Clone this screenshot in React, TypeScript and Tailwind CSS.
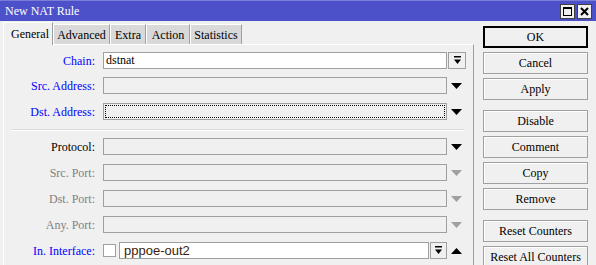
import React from 'react';

const serif = "[font-family:'Liberation_Serif',serif]";

function DownBar() {
  return (
    <svg width="9" height="9" viewBox="0 0 9 9">
      <rect x="1" y="0" width="7" height="1.5" fill="#000" />
      <path d="M1 3.5 H8 L4.5 8 Z" fill="#000" />
    </svg>
  );
}

function Arrow({ up, gray }: { up?: boolean; gray?: boolean }) {
  const c = gray ? '#a0a0a0' : '#000';
  return (
    <div className="w-[18px] flex justify-center">
      <svg width="11" height="6" viewBox="0 0 11 6">
        {up ? <path d="M0 6 L5.5 0 L11 6 Z" fill={c} /> : <path d="M0 0 H11 L5.5 6 Z" fill={c} />}
      </svg>
    </div>
  );
}

function Row({
  label,
  color,
  children,
  className = '',
}: {
  label: string;
  color: string;
  children: React.ReactNode;
  className?: string;
}) {
  return (
    <div className={`flex items-center h-[17px] ${className}`}>
      <div className={`w-[92px] pr-[1px] text-right text-[12px] ${color}`}>{label}</div>
      <div className="w-[7px]" />
      {children}
    </div>
  );
}

function EmptyField({ focus }: { focus?: boolean }) {
  return (
    <div className="w-[344px] h-[17px] border border-[#a0a0a0] bg-[#f0f0f0] p-[1px]">
      {focus && <div className="w-full h-full border border-dotted border-black" />}
    </div>
  );
}

const buttons: { label: string; gap?: boolean; def?: boolean }[] = [
  { label: 'OK', def: true },
  { label: 'Cancel' },
  { label: 'Apply' },
  { label: 'Disable', gap: true },
  { label: 'Comment' },
  { label: 'Copy' },
  { label: 'Remove' },
  { label: 'Reset Counters', gap: true },
  { label: 'Reset All Counters' },
];

const tabs = [
  { label: 'Advanced', w: 'w-[57px]' },
  { label: 'Extra', w: 'w-[36px]' },
  { label: 'Action', w: 'w-[44px]' },
  { label: 'Statistics', w: 'w-[52px]' },
];

export default function App() {
  return (
    <div className={`w-[596px] h-[265px] overflow-hidden bg-[#f0f0f0] relative ${serif}`}>
      <div className="h-[21px] bg-[#4c50c9] border-t border-[#7a7ed8] flex items-center justify-between pl-[5px] pr-[4px]">
        <span className="text-white text-[12px]">New NAT Rule</span>
        <div className="flex gap-[2px]">
          <div className="w-[15px] h-[15px] bg-[#f0f0f0] border border-[#404040] flex items-center justify-center">
            <div className="w-[9px] h-[9px] border border-black border-t-2" />
          </div>
          <div className="w-[15px] h-[15px] bg-[#f0f0f0] border border-[#404040] flex items-center justify-center">
            <svg width="9" height="9" viewBox="0 0 9 9">
              <path d="M1 1 L8 8 M8 1 L1 8" stroke="#000" strokeWidth="2" />
            </svg>
          </div>
        </div>
      </div>

      <div className="flex">
        <div className="w-[474px] pl-[3px]">
          <div className="flex items-end h-[23px] pt-[1px]">
            <div className="h-[23px] w-[50px] bg-[#f0f0f0] border-t border-l border-white border-r border-r-[#a0a0a0] -mb-[1px] relative z-10 flex items-center pl-[7px] text-[12px]">
              General
            </div>
            {tabs.map((t) => (
              <div
                key={t.label}
                className={`h-[20px] ${t.w} bg-[#d9d9d9] border-t border-l border-white border-r border-r-[#a0a0a0] flex items-center justify-center text-[12px]`}
              >
                {t.label}
              </div>
            ))}
          </div>
          <div className="h-[230px] border-t border-white border-l border-l-white border-r border-r-[#a0a0a0] pt-[7px]">
            <Row label="Chain:" color="text-[#0000ff]">
              <div className="w-[344px] h-[17px] border border-[#a0a0a0] bg-white pl-[2px] text-[12px] leading-[15px]">
                dstnat
              </div>
              <div className="w-[18px] h-[17px] ml-[1px] border border-[#a0a0a0] bg-[#f0f0f0] flex items-center justify-center">
                <DownBar />
              </div>
            </Row>
            <Row label="Src. Address:" color="text-[#0000ff]" className="mt-[8px]">
              <EmptyField />
              <Arrow />
            </Row>
            <Row label="Dst. Address:" color="text-[#0000ff]" className="mt-[9px]">
              <EmptyField focus />
              <Arrow />
            </Row>
            <div className="ml-[7px] w-[454px] h-[2px] border-t border-[#dcdcdc] border-b border-b-white mt-[9px]" />
            <Row label="Protocol:" color="text-black" className="mt-[7px]">
              <EmptyField />
              <Arrow />
            </Row>
            <Row label="Src. Port:" color="text-[#808080]" className="mt-[9px]">
              <EmptyField />
              <Arrow gray />
            </Row>
            <Row label="Dst. Port:" color="text-[#808080]" className="mt-[9px]">
              <EmptyField />
              <Arrow gray />
            </Row>
            <Row label="Any. Port:" color="text-[#808080]" className="mt-[9px]">
              <EmptyField />
              <Arrow gray />
            </Row>
            <Row label="In. Interface:" color="text-[#0000ff]" className="mt-[9px]">
              <div className="w-[13px] h-[13px] border border-[#a0a0a0] bg-white" />
              <div className="w-[310px] h-[17px] ml-[3px] border border-[#a0a0a0] bg-white pl-[4px] text-[13px] leading-[15px] text-[#3b1c0c] [font-family:'Liberation_Sans',sans-serif]">
                pppoe-out2
              </div>
              <div className="w-[17px] h-[17px] ml-[1px] border border-[#a0a0a0] bg-[#f0f0f0] flex items-center justify-center">
                <DownBar />
              </div>
              <Arrow up />
            </Row>
          </div>
        </div>

        <div className="pl-[9px] pt-[5px] flex flex-col">
          {buttons.map((b) => (
            <div
              key={b.label}
              className={`w-[105px] h-[22px] flex items-center justify-center text-[12px] bg-[#f0f0f0] ${
                b.def ? 'border-2 border-black' : 'border border-[#a0a0a0] shadow-[inset_1px_1px_0_#fff]'
              } ${b.gap ? 'mt-[10px]' : 'mt-[4px]'} first:mt-0`}
            >
              {b.label}
            </div>
          ))}
        </div>
      </div>
    </div>
  );
}
